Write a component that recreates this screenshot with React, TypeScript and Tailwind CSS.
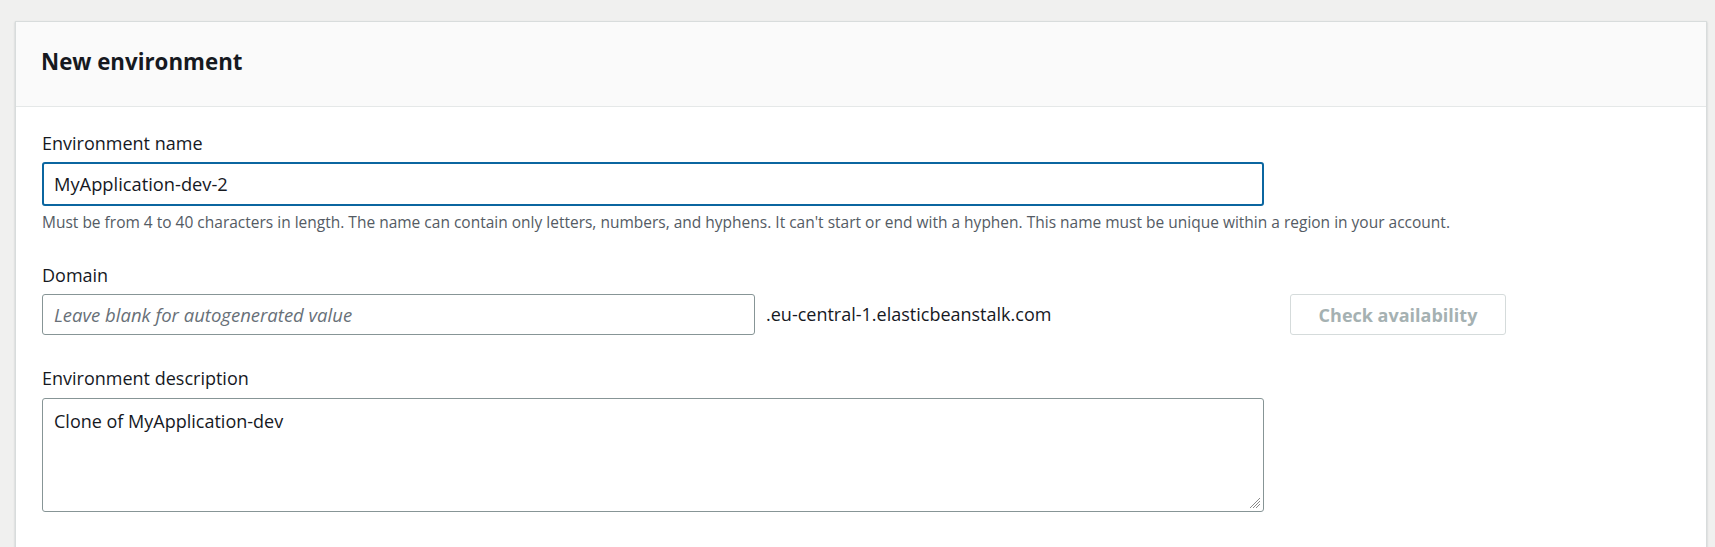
import React from "react";

export default function App() {
  const font = { fontFamily: '"Open Sans", "Noto Sans", Arial, sans-serif' };
  return (
    <div className="min-h-[547px] w-full bg-[#f0f0ef] pt-[21px] pl-[15px] pr-[8px] overflow-hidden" style={font}>
      <div className="bg-white border border-[#d8dcdc] shadow-[0_1px_2px_rgba(0,28,36,0.2)] h-[540px]">
        <div className="h-[85px] bg-[#fafafa] border-b border-[#e5e8e8] flex items-center px-[25px] pb-[4px]">
          <h2 className="text-[22.3px] font-bold text-[#16191f]">New environment</h2>
        </div>
        <div className="px-[26px] pt-[24px]">
          <label className="block text-[18px] leading-[24px] text-[#16191f]">Environment name</label>
          <div className="mt-[7px] w-[1222px] h-[44px] border-2 border-[#0b66a0] rounded-[3px] flex items-center px-[10px]">
            <span className="text-[18.3px] text-[#16191f]">MyApplication-dev-2</span>
          </div>
          <p className="mt-[6px] text-[15.5px] leading-[20px] text-[#545b64]">
            Must be from 4 to 40 characters in length. The name can contain only letters, numbers, and hyphens. It can't start or end with a hyphen. This name must be unique within a region in your account.
          </p>
          <label className="block mt-[31px] text-[18px] leading-[24px] text-[#16191f]">Domain</label>
          <div className="mt-[7px] flex items-center">
            <div className="w-[713px] h-[41px] border border-[#879596] rounded-[3px] flex items-center px-[11px]">
              <span className="text-[18.5px] italic text-[#687078]">Leave blank for autogenerated value</span>
            </div>
            <span className="ml-[11px] text-[18px] text-[#16191f]">.eu-central-1.elasticbeanstalk.com</span>
            <button className="ml-auto mr-[174px] w-[216px] h-[41px] border border-[#d5dbdb] rounded-[3px] bg-white text-[18px] font-bold text-[#a5b1b2] pt-[1px]">
              Check availability
            </button>
          </div>
          <label className="block mt-[31px] text-[18px] leading-[24px] text-[#16191f]">Environment description</label>
          <div className="relative mt-[8px] w-[1222px] h-[114px] border border-[#879596] rounded-[3px] px-[11px] pt-[10px]">
            <span className="text-[18px] leading-[24px] text-[#16191f]">Clone of MyApplication-dev</span>
            <svg className="absolute right-[2px] bottom-[2px]" width="12" height="12" viewBox="0 0 12 12">
              <line x1="11" y1="1" x2="1" y2="11" stroke="#8a8a8a" strokeWidth="1" />
              <line x1="11" y1="4" x2="4" y2="11" stroke="#8a8a8a" strokeWidth="1" />
              <line x1="11" y1="7" x2="7" y2="11" stroke="#8a8a8a" strokeWidth="1" />
            </svg>
          </div>
        </div>
      </div>
    </div>
  );
}
